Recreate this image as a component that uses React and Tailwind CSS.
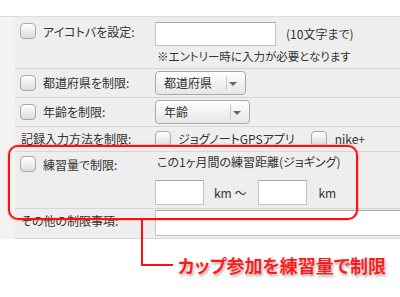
import React from "react";

const font = "[font-family:'Noto_Sans_CJK_JP','Liberation_Sans',sans-serif] [font-feature-settings:'palt']";

function Check({ className = "" }) {
  return (
    <span
      className={`inline-block shrink-0 w-[16px] h-[16px] rounded-[4px] border border-[#a9a9a9] bg-gradient-to-b from-white to-[#dcdcdc] shadow-[inset_0_1px_0_#fff] ${className}`}
    />
  );
}

function Select({ label, width, divider }) {
  return (
    <div
      className={`relative shrink-0 flex items-center h-[24px] rounded-[4px] border border-[#a9a9a9] bg-gradient-to-b from-white to-[#e6e6e6] ${width}`}
    >
      <span className="pl-[8px] text-[12px] leading-none text-[#333]">{label}</span>
      <span className={`absolute top-[4px] bottom-[4px] w-px bg-[#c8c8c8] ${divider}`} />
      <span className="absolute right-[8px] top-[10px] w-0 h-0 border-l-[4px] border-r-[4px] border-t-[4px] border-l-transparent border-r-transparent border-t-[#666]" />
    </div>
  );
}

function TextBox({ className = "" }) {
  return (
    <div className={`shrink-0 bg-white border border-[#c4c4c4] border-t-[#a8a8a8] ${className}`} />
  );
}

export default function App() {
  return (
    <div className={`relative w-[400px] h-[297px] bg-white overflow-hidden text-[#333] ${font}`}>
      <div className="h-[16px] bg-white" />
      <div className="border-t border-[#dcdcdc] bg-[#f3f3f3] pl-[15px]">
        <div className="bg-[#eeeeee] border-b border-[#d6d6d6] text-[12px] leading-none">
          {/* Row 1 */}
          <div className="flex h-[52px] border-b border-[#d6d6d6]">
            <div className="w-[140px] shrink-0 flex items-start pt-[6px] pl-[5px]">
              <Check />
              <span className="ml-[7px] mt-[3px]">アイコトバを設定:</span>
            </div>
            <div className="flex flex-col pt-[5px]">
              <div className="flex items-center">
                <TextBox className="w-[121px] h-[24px]" />
                <span className="ml-[10px]">(10文字まで)</span>
              </div>
              <span className="mt-[5px] ml-[2px] text-[11.5px]">※エントリー時に入力が必要となります</span>
            </div>
          </div>
          {/* Row 2 */}
          <div className="flex items-center h-[29px] border-b border-[#d6d6d6]">
            <div className="w-[140px] shrink-0 flex items-center pl-[5px]">
              <Check />
              <span className="ml-[7px]">都道府県を制限:</span>
            </div>
            <Select label="都道府県" width="w-[91px]" divider="left-[70px]" />
          </div>
          {/* Row 3 */}
          <div className="flex items-center h-[29px] border-b border-[#d6d6d6]">
            <div className="w-[140px] shrink-0 flex items-center pl-[5px]">
              <Check />
              <span className="ml-[7px]">年齢を制限:</span>
            </div>
            <Select label="年齢" width="w-[95px]" divider="left-[74px]" />
          </div>
          {/* Row 4 */}
          <div className="flex items-center h-[25px] border-b border-[#d6d6d6]">
            <div className="w-[140px] shrink-0 pl-[6px]">記録入力方法を制限:</div>
            <Check />
            <span className="ml-[7px]">ジョグノートGPSアプリ</span>
            <Check className="ml-[16px]" />
            <span className="ml-[8px]">nike+</span>
          </div>
          {/* Row 5 */}
          <div className="flex h-[57px] border-b border-[#d6d6d6]">
            <div className="w-[140px] shrink-0 flex items-start pt-[4px] pl-[5px]">
              <Check />
              <span className="ml-[7px] mt-[3px]">練習量で制限:</span>
            </div>
            <div className="flex flex-col pt-[3px]">
              <span className="ml-[2px] mt-[1px]">この1ヶ月間の練習距離(ジョギング)</span>
              <div className="flex items-center mt-[12px]">
                <TextBox className="w-[49px] h-[25px]" />
                <span className="ml-[10px]">km ～</span>
                <TextBox className="ml-[12px] w-[49px] h-[25px]" />
                <span className="ml-[11px]">km</span>
              </div>
            </div>
          </div>
          {/* Row 6 */}
          <div className="flex h-[29px]">
            <div className="w-[140px] shrink-0 pl-[6px] pt-[6px]">その他の制限事項:</div>
            <TextBox className="mt-[1px] w-[260px] h-[26px]" />
          </div>
        </div>
      </div>

      {/* Annotation */}
      <div className="absolute left-[8px] top-[145px] w-[350px] h-[75px] rounded-[10px] border-2 border-[#ff1010] shadow-[0_0_2px_rgba(255,0,0,0.6)]" />
      <div className="absolute left-[141px] top-[219px] w-[32px] h-[47px] border-l-2 border-b-2 border-[#ff1010]" />
      <div className="absolute left-[178px] top-[253px] text-[18px] leading-[24px] font-bold text-[#ff1a1a] [text-shadow:0_0_1px_#fff,1px_2px_3px_rgba(0,0,0,0.35)] whitespace-nowrap">
        カップ参加を練習量で制限
      </div>
    </div>
  );
}
